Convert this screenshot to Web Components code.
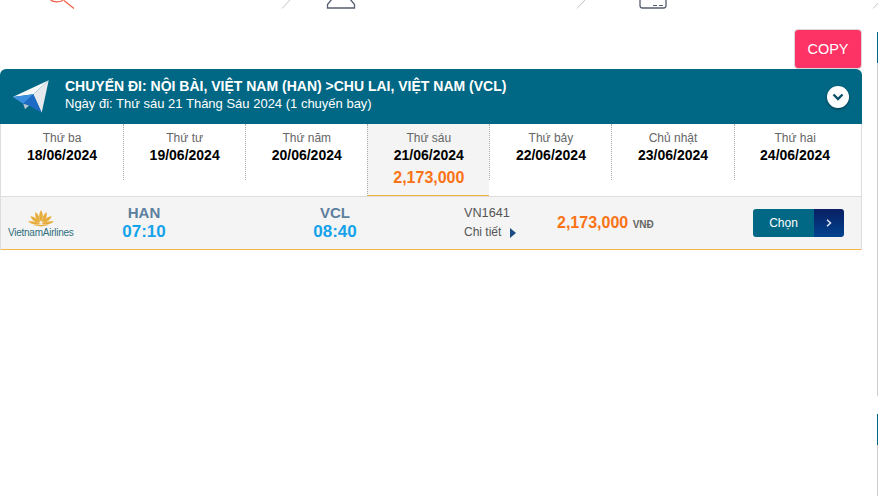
<!DOCTYPE html>
<html lang="vi">
<head>
<meta charset="utf-8">
<title>Chuyến đi</title>
<style>
  html, body { margin: 0; padding: 0; background: #fff; height: 100%; overflow: hidden; }
  body { font-family: "Liberation Sans", Arial, sans-serif; }
</style>
</head>
<body>
<booking-page>
  <top-icons></top-icons>
  <copy-button>COPY</copy-button>
  <flight-panel>
    <span slot="title">CHUYẾN ĐI: NỘI BÀI, VIỆT NAM (HAN) &gt;CHU LAI, VIỆT NAM (VCL)</span>
    <span slot="sub">Ngày đi: Thứ sáu 21 Tháng Sáu 2024 (1 chuyến bay)</span>
    <day-tabs slot="tabs">
      <day-tab label="Thứ ba" date="18/06/2024"></day-tab>
      <day-tab label="Thứ tư" date="19/06/2024"></day-tab>
      <day-tab label="Thứ năm" date="20/06/2024"></day-tab>
      <day-tab label="Thứ sáu" date="21/06/2024" price="2,173,000" active></day-tab>
      <day-tab label="Thứ bảy" date="22/06/2024"></day-tab>
      <day-tab label="Chủ nhật" date="23/06/2024"></day-tab>
      <day-tab label="Thứ hai" date="24/06/2024"></day-tab>
    </day-tabs>
    <flight-row slot="rows"></flight-row>
  </flight-panel>
</booking-page>

<script>
class BookingPage extends HTMLElement {
  constructor() {
    super();
    this.attachShadow({ mode: 'open' }).innerHTML = `
      <style>
        :host { display: grid; grid-template-columns: 877px 1px; width: 878px; height: 496px; overflow: hidden; }
        .main { display: flex; flex-direction: column; width: 862px; }
        .rail { display: flex; flex-direction: column; }
        .rail i { display: block; }
      </style>
      <div class="main"><slot></slot></div>
      <div class="rail">
        <i style="height:32px"></i>
        <i style="height:31px;background:#006885"></i>
        <i style="height:333px;background:#ccc"></i>
        <i style="height:18px"></i>
        <i style="height:31px;background:#006885"></i>
        <i style="height:51px;background:#ccc"></i>
      </div>`;
  }
}

class TopIcons extends HTMLElement {
  constructor() {
    super();
    this.attachShadow({ mode: 'open' }).innerHTML = `
      <style>
        :host { display: block; width: 878px; height: 29px; }
        .cells { display: flex; height: 10px; }
        .cell { flex: 0 0 295.5px; height: 10px; display: flex; justify-content: space-between; align-items: flex-start; }
        svg { display: block; }
        .slash { margin-right: 5px; }
      </style>
      <div class="cells">
        <div class="cell">
          <svg style="margin-left:49px" width="27" height="10" viewBox="0 0 27 10" fill="none" stroke="#ee5f4a" stroke-width="1.2">
            <path d="M1 -1C3 2.5 12 3 15.5 -1"/><path d="M15 0.5L25 8.5"/>
          </svg>
          <svg class="slash" width="10" height="10" viewBox="0 0 10 10" fill="none" stroke="#c4c4c4"><path d="M1 8.5L9 0"/></svg>
        </div>
        <div class="cell">
          <svg style="margin-left:28px" width="32" height="10" viewBox="0 0 32 10" fill="none" stroke="#565d70" stroke-width="1.3">
            <path d="M8 -1L3.5 4.5V8H30.5V4.5L26 -1"/>
          </svg>
          <svg class="slash" width="10" height="10" viewBox="0 0 10 10" fill="none" stroke="#c4c4c4"><path d="M1 8.5L9 0"/></svg>
        </div>
        <div class="cell">
          <svg style="margin-left:45px" width="32" height="10" viewBox="0 0 32 10" fill="none" stroke="#565d70" stroke-width="1.3">
            <path d="M4 -1V5.5Q4 8 6.5 8H27.5Q30 8 30 5.5V-1"/>
            <path d="M17 5.5H21M23 5.5H27" stroke-width="1"/>
          </svg>
          <svg class="slash" width="10" height="10" viewBox="0 0 10 10" fill="none" stroke="#c4c4c4"><path d="M1 8.5L9 0"/></svg>
        </div>
      </div>`;
  }
}

class CopyButton extends HTMLElement {
  constructor() {
    super();
    this.attachShadow({ mode: 'open' }).innerHTML = `
      <style>
        :host { display: flex; justify-content: flex-end; height: 40px; }
        button {
          width: 68px; height: 40px; padding: 0; box-sizing: border-box;
          background: #fd3365; color: #fff; border: 1px solid #d9d9d9; border-radius: 4px;
          font: 14.5px "Liberation Sans", Arial, sans-serif;
        }
      </style>
      <button><slot></slot></button>`;
  }
}

class FlightPanel extends HTMLElement {
  constructor() {
    super();
    this.attachShadow({ mode: 'open' }).innerHTML = `
      <style>
        :host { display: block; width: 862px; }
        .head {
          display: flex; align-items: center; height: 55px; box-sizing: border-box;
          background: #006885; color: #fff; border-radius: 6px 6px 0 0;
          padding: 0 13px 0 12px;
        }
        .plane { flex: none; margin-right: 16px; }
        .text { flex: 1; margin-top: -4px; }
        .title { font-size: 14px; font-weight: bold; line-height: 18px; }
        .sub { font-size: 13px; line-height: 18px; }
        .toggle {
          width: 22px; height: 22px; border-radius: 50%; background: #fff;
          box-shadow: 0 1px 3px rgba(0,0,0,.45);
          display: flex; align-items: center; justify-content: center;
        }
        .body { border-left: 1px solid #ddd; border-right: 1px solid #ddd; }
      </style>
      <div class="head">
        <svg class="plane" width="37" height="34" viewBox="0 0 37 34">
          <path d="M36.7 .3L.7 17L21.3 14.3Z" fill="#f7f8fa"/>
          <path d="M36.7 .3L29.7 32.7L21.3 14.3Z" fill="#e6eaee"/>
          <path d="M.7 17L21.3 14.3L11.3 23.7Z" fill="#3a8fe0"/>
          <path d="M21.3 14.3L29.7 32.7L17 25.5L11.3 23.7Z" fill="#1d6bc4"/>
          <path d="M11.3 23.7L13 29.3L17 25.5Z" fill="#b9c5d0"/>
        </svg>
        <div class="text">
          <div class="title"><slot name="title"></slot></div>
          <div class="sub"><slot name="sub"></slot></div>
        </div>
        <div class="toggle">
          <svg width="12" height="8" viewBox="0 0 12 8" fill="none" stroke="#0b5068" stroke-width="2.4"><path d="M1.5 1.5L6 6L10.5 1.5"/></svg>
        </div>
      </div>
      <div class="body">
        <slot name="tabs"></slot>
        <slot name="rows"></slot>
      </div>`;
  }
}

class DayTabs extends HTMLElement {
  constructor() {
    super();
    this.attachShadow({ mode: 'open' }).innerHTML = `
      <style>
        :host { display: grid; grid-template-columns: repeat(7, 122.1px); align-items: start; height: 72px; }
      </style>
      <slot></slot>`;
  }
}

class DayTab extends HTMLElement {
  constructor() {
    super();
    this.attachShadow({ mode: 'open' });
  }

  connectedCallback() {
    const price = this.getAttribute('price');
    this.shadowRoot.innerHTML = `
      <style>
        :host {
          display: block; box-sizing: border-box; height: 56px; padding-top: 6px;
          border-left: 1px dotted #aaa; text-align: center;
        }
        :host(:first-child) { border-left: 0; }
        :host([active]) { height: 72px; background: #f4f4f4; border-bottom: 1px solid #f2b544; }
        .label { font-size: 12px; line-height: 16px; color: #666; }
        .date { font-size: 14px; line-height: 18px; font-weight: bold; color: #000; }
        .price { font-size: 16px; line-height: 20px; margin-top: 4px; font-weight: bold; color: #f97316; }
      </style>
      <div class="label">${this.getAttribute('label')}</div>
      <div class="date">${this.getAttribute('date')}</div>
      ${price ? `<div class="price">${price}</div>` : ''}`;
  }
}

class FlightRow extends HTMLElement {
  constructor() {
    super();
    this.attachShadow({ mode: 'open' }).innerHTML = `
      <style>
        :host {
          display: flex; align-items: center; box-sizing: border-box; height: 54px;
          background: #f4f4f4; border-top: 1px solid #ddd; border-bottom: 1px solid #f2b544;
          padding-right: 17px;
        }
        .logo { width: 65px; margin-left: 7px; text-align: center; }
        .logo svg { display: block; margin: 1px auto 0; }
        .logo span {
          display: block; font-size: 10px; line-height: 11px; color: #2f6f80;
          letter-spacing: -.25px; white-space: nowrap;
        }
        .place { width: 80px; text-align: center; font-weight: bold; }
        .a { margin-left: 31px; }
        .b { margin-left: 111px; }
        .code { font-size: 15px; line-height: 18px; color: #5d7f9e; }
        .time { font-size: 17px; line-height: 20px; color: #14a3ea; }
        .info { width: 93px; margin-left: 89px; font-size: 12px; line-height: 19px; color: #555; }
        .info .fn { font-size: 12.7px; }
        .info .more { display: flex; align-items: center; gap: 9px; }
        .tri { width: 0; height: 0; border-left: 6px solid #1c4b84; border-top: 5px solid transparent; border-bottom: 5px solid transparent; }
        .price { font-size: 16px; font-weight: bold; color: #f97316; white-space: nowrap; }
        .price small { font-size: 10px; color: #666; }
        .choose {
          margin-left: auto; display: flex; width: 91px; height: 28px; border-radius: 3px; overflow: hidden;
          font-size: 12px; color: #fff;
        }
        .choose b { flex: 1; font-weight: normal; background: #006885; display: flex; align-items: center; justify-content: center; }
        .choose i {
          width: 30px; background: linear-gradient(#0a1f63, #00438e);
          display: flex; align-items: center; justify-content: center;
        }
      </style>
      <div class="logo">
        <svg width="26" height="17" viewBox="0 0 26 17" fill="#e7ad3a">
          <path d="M13 0C10.5 4 10.5 8 13 12C15.5 8 15.5 4 13 0Z"/>
          <path d="M7.5 2C6.5 6 8 10 12 12.5C12 8 10.5 4.5 7.5 2Z"/>
          <path d="M18.5 2C19.5 6 18 10 14 12.5C14 8 15.5 4.5 18.5 2Z"/>
          <path d="M2.5 6C3.5 10 7 12.5 11.5 13C10 9.5 7 7 2.5 6Z"/>
          <path d="M23.5 6C22.5 10 19 12.5 14.5 13C16 9.5 19 7 23.5 6Z"/>
          <path d="M0 11.5C3 14.5 9 15.5 13 14C9 12 4 10.5 0 11.5Z"/>
          <path d="M26 11.5C23 14.5 17 15.5 13 14C17 12 22 10.5 26 11.5Z"/>
          <path d="M5 15H21L13 16.5Z"/>
        </svg>
        <span>VietnamAirlines</span>
      </div>
      <div class="place a"><div class="code">HAN</div><div class="time">07:10</div></div>
      <div class="place b"><div class="code">VCL</div><div class="time">08:40</div></div>
      <div class="info">
        <div class="fn">VN1641</div>
        <div class="more">Chi tiết <span class="tri"></span></div>
      </div>
      <div class="price">2,173,000 <small>VNĐ</small></div>
      <div class="choose">
        <b>Chọn</b>
        <i><svg width="6" height="8" viewBox="0 0 6 8" fill="none" stroke="#dfe8f5" stroke-width="1.5"><path d="M1 .8L4.5 4L1 7.2"/></svg></i>
      </div>`;
  }
}

customElements.define('booking-page', BookingPage);
customElements.define('top-icons', TopIcons);
customElements.define('copy-button', CopyButton);
customElements.define('flight-panel', FlightPanel);
customElements.define('day-tabs', DayTabs);
customElements.define('day-tab', DayTab);
customElements.define('flight-row', FlightRow);
</script>
</body>
</html>
